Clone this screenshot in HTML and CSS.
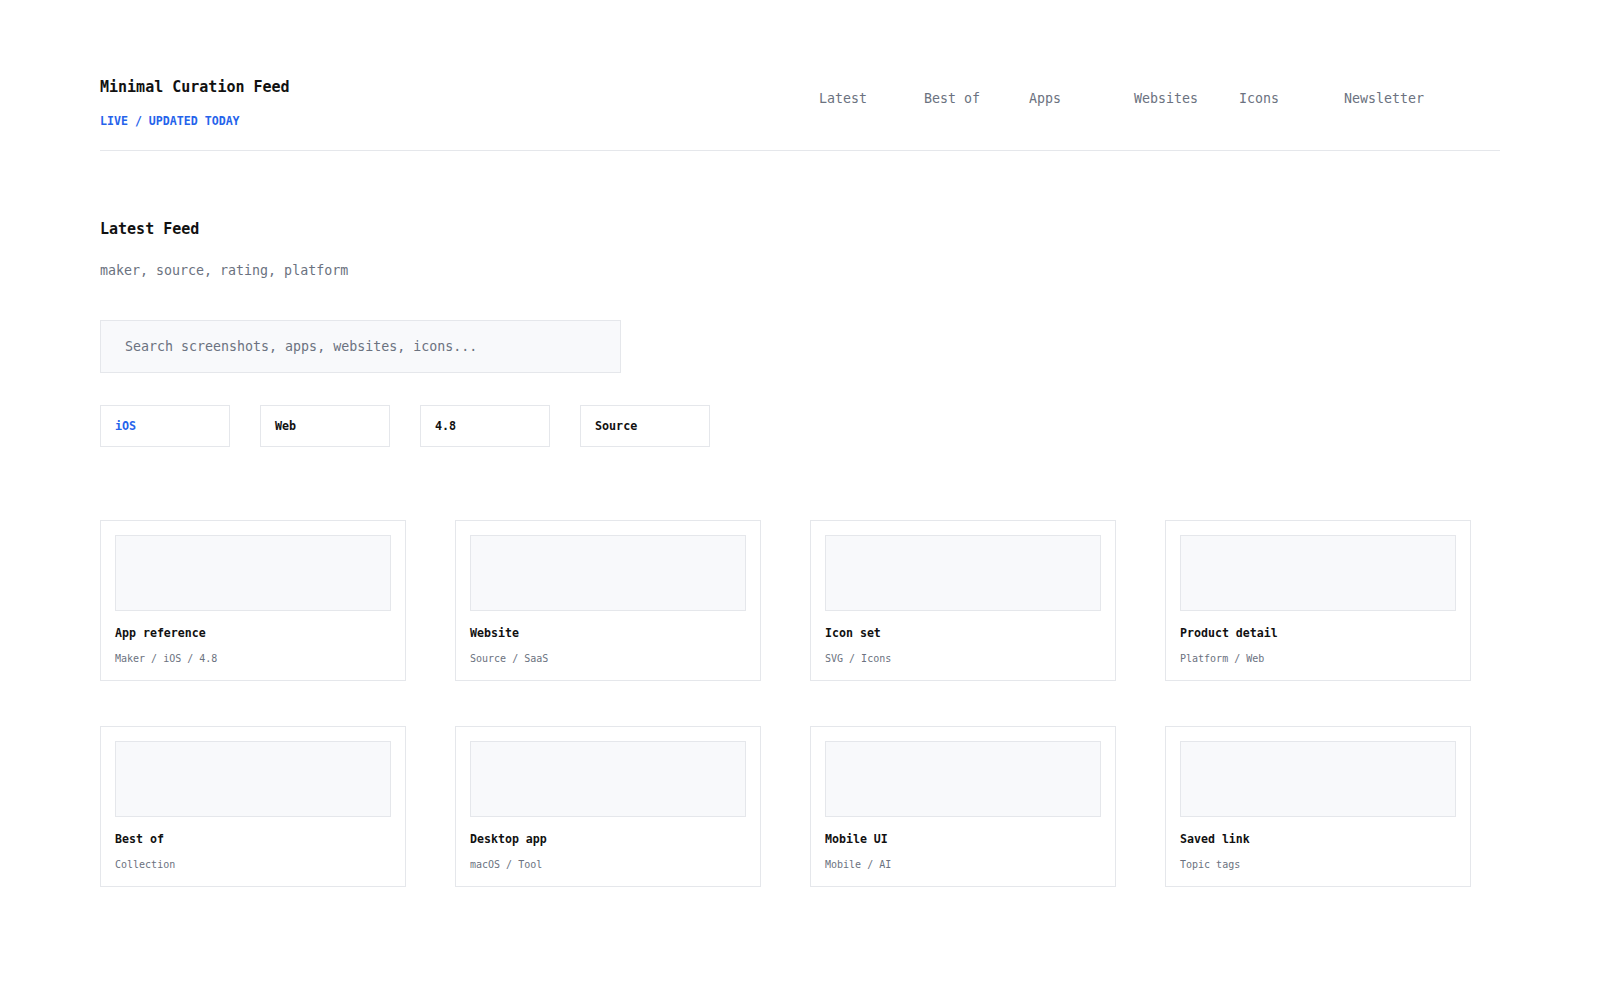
FILE: index.html
```html
<!DOCTYPE html>
<html lang="en">
<head>
    <meta charset="UTF-8">
    <meta name="viewport" content="width=device-width, initial-scale=1.0">
    <title>Minimal Curation Feed</title>
    <link rel="stylesheet" href="styles.css">
</head>
<body>

    <div class="page">
        <!-- Top bar -->
        <header class="site-header">
            <div class="brand">
                <h1>Minimal Curation Feed</h1>
                <p class="status">LIVE / UPDATED TODAY</p>
            </div>
            <nav class="main-nav">
                <a href="#">Latest</a>
                <a href="#">Best of</a>
                <a href="#">Apps</a>
                <a href="#">Websites</a>
                <a href="#">Icons</a>
                <a href="#">Newsletter</a>
            </nav>
        </header>

        <section class="feed">
            <h2>Latest Feed</h2>
            <p class="feed-meta">maker, source, rating, platform</p>

            <input class="search" type="text" placeholder="Search screenshots, apps, websites, icons...">

            <div class="filters">
                <button class="chip active">iOS</button>
                <button class="chip">Web</button>
                <button class="chip">4.8</button>
                <button class="chip">Source</button>
            </div>

            <!-- Cards -->
            <div class="grid">
                <div class="card">
                    <div class="thumb"></div>
                    <h3>App reference</h3>
                    <p>Maker / iOS / 4.8</p>
                </div>
                <div class="card">
                    <div class="thumb"></div>
                    <h3>Website</h3>
                    <p>Source / SaaS</p>
                </div>
                <div class="card">
                    <div class="thumb"></div>
                    <h3>Icon set</h3>
                    <p>SVG / Icons</p>
                </div>
                <div class="card">
                    <div class="thumb"></div>
                    <h3>Product detail</h3>
                    <p>Platform / Web</p>
                </div>
                <div class="card">
                    <div class="thumb"></div>
                    <h3>Best of</h3>
                    <p>Collection</p>
                </div>
                <div class="card">
                    <div class="thumb"></div>
                    <h3>Desktop app</h3>
                    <p>macOS / Tool</p>
                </div>
                <div class="card">
                    <div class="thumb"></div>
                    <h3>Mobile UI</h3>
                    <p>Mobile / AI</p>
                </div>
                <div class="card">
                    <div class="thumb"></div>
                    <h3>Saved link</h3>
                    <p>Topic tags</p>
                </div>
            </div>
        </section>
    </div>

</body>
</html>
```

FILE: styles.css
```css
body {
    font-family: "DejaVu Sans Mono", monospace;
    margin: 0;
    padding: 0;
    background-color: #fff;
    color: #111;
}
.page {
    padding: 78px 100px 80px;
}
h1, h2, h3, p {
    margin: 0;
    line-height: normal;
}

/* Header */
.site-header {
    display: flex;
    justify-content: space-between;
    align-items: flex-start;
    padding-bottom: 22px;
    border-bottom: 1px solid #e5e7eb;
}
.site-header h1 {
    font-size: 15px;
    font-weight: 700;
}
.status {
    margin-top: 18px;
    font-size: 11.6px;
    font-weight: 700;
    color: #2563eb;
}
.main-nav {
    display: grid;
    grid-template-columns: repeat(6, 105px);
    margin-top: 13px;
    margin-right: 51px;
}
.main-nav a {
    font-size: 13.3px;
    color: #6b7280;
    text-decoration: none;
}

/* Feed */
.feed {
    padding-top: 69px;
}
.feed h2 {
    font-size: 15px;
    font-weight: 700;
}
.feed-meta {
    margin-top: 25px;
    font-size: 13.3px;
    color: #6b7280;
}
.search {
    display: block;
    box-sizing: border-box;
    width: 521px;
    height: 53px;
    margin-top: 42px;
    padding: 0 24px;
    font-family: "DejaVu Sans Mono", monospace;
    font-size: 13.3px;
    color: #111;
    background-color: #f8f9fb;
    border: 1px solid #e5e7eb;
    outline: none;
}
.search::placeholder {
    color: #6b7280;
}
.filters {
    display: flex;
    gap: 30px;
    margin-top: 32px;
}
.chip {
    box-sizing: border-box;
    width: 130px;
    height: 42px;
    padding: 0 14px;
    text-align: left;
    font-family: "DejaVu Sans Mono", monospace;
    font-size: 11.7px;
    font-weight: 700;
    color: #111;
    background-color: #fff;
    border: 1px solid #e5e7eb;
    cursor: pointer;
}
.chip.active {
    color: #2563eb;
}

/* Card grid */
.grid {
    display: grid;
    grid-template-columns: repeat(4, 306px);
    column-gap: 49px;
    row-gap: 45px;
    margin-top: 73px;
}
.card {
    border: 1px solid #e5e7eb;
    padding: 14px 14px 16px;
}
.thumb {
    height: 74px;
    background-color: #f8f9fb;
    border: 1px solid #e5e7eb;
}
.card h3 {
    margin-top: 15px;
    font-size: 11.6px;
    font-weight: 700;
}
.card p {
    margin-top: 13px;
    font-size: 10px;
    color: #6b7280;
}
```
